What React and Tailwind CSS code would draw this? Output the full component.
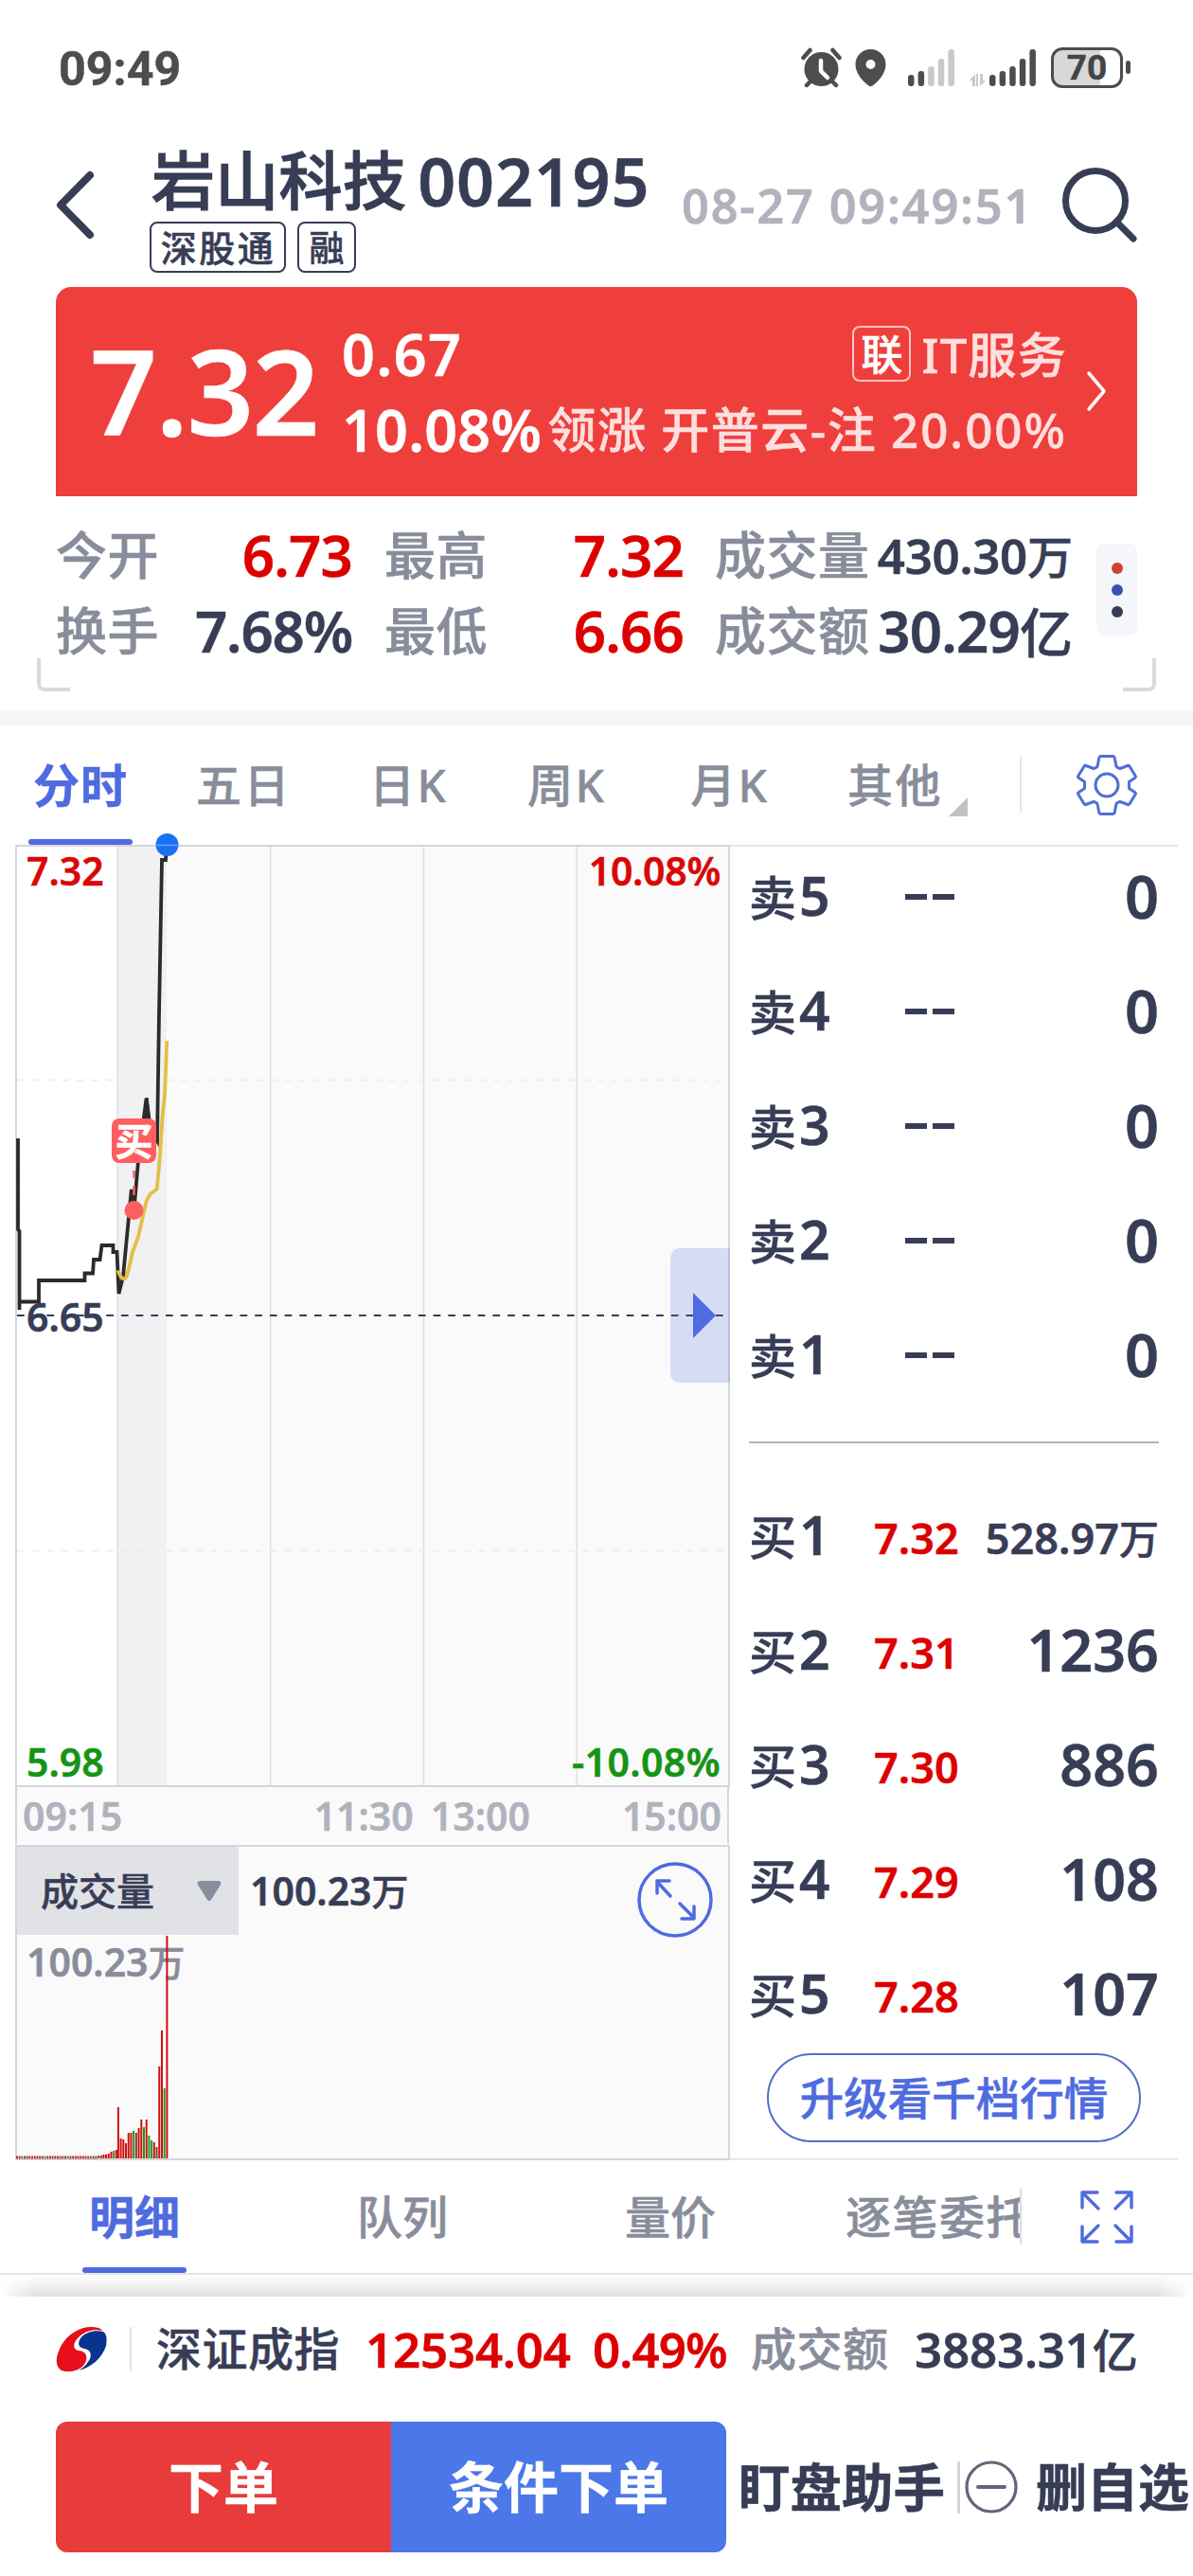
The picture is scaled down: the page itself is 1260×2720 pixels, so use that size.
const sells = ["卖5", "卖4", "卖3", "卖2", "卖1"];

const buys = [
  ["买1", "7.32", "528.97万"],
  ["买2", "7.31", "1236"],
  ["买3", "7.30", "886"],
  ["买4", "7.29", "108"],
  ["买5", "7.28", "107"],
];

// [height, colour] of each minute's volume from 09:30 on
const minuteBars = [
  [54, "r"], [21, "r"], [20, "r"], [16, "r"], [27, "r"], [27, "r"], [29, "g"], [27, "m"], [32, "r"], [41, "r"],
  [33, "g"], [41, "r"], [24, "g"], [19, "g"], [17, "r"], [12, "m"], [97, "r"], [135, "r"], [74, "g"], [235, "r"],
];
const barFill = { r: "#cf1010", g: "#1c9a1c", m: "#8a3a3a" };
const auctionRise = [3, 3, 4, 4, 5, 7, 8, 9];

function StatusBar() {
  return (
    <div className="flex h-[145px] items-start pt-[50px] pr-[66px] pl-[62px] text-[#4d4d4d]">
      <div className="font-['Roboto',sans-serif] text-[50px] leading-[46px] font-bold tracking-[0.1px]">09:49</div>
      <div className="ml-auto flex items-start">
        <svg width="254" height="44" viewBox="845 50 254 44" className="block">
          <g fill="#4d4d4d">
            <circle cx="866.5" cy="73" r="18" />
            <path d="M847.500 61l7-8M885.500 61l-7-8M851 90l5-5M882 90l-5-5" stroke="#4d4d4d" strokeWidth="4.500" strokeLinecap="round" />
            <path d="M866 64v11l7 7" fill="none" stroke="#fff" strokeWidth="4.500" strokeLinecap="round" strokeLinejoin="round" />
            <path fillRule="evenodd" d="M918.500 52c-9 0-16 7-16 16 0 10 8 18 14 22.500q2 1.500 4 0c6-4.500 14-12.500 14-22.500 0-9-7-16-16-16zm0 11a5 5 0 1 1 0 10 5 5 0 0 1 0-10z" />
            <rect x="958" y="79" width="6.500" height="12" rx="3" />
            <rect x="968.600" y="75" width="6.500" height="16" rx="3" />
            <rect x="1044" y="79" width="6.500" height="12" rx="3" />
            <rect x="1054.600" y="75" width="6.500" height="16" rx="3" />
            <rect x="1065.200" y="70" width="6.500" height="21" rx="3" />
            <rect x="1075.800" y="62" width="6.500" height="29" rx="3" />
            <rect x="1086.400" y="52" width="6.500" height="39" rx="3" />
          </g>
          <g fill="#c9c9c9">
            <rect x="979.200" y="70" width="6.500" height="21" rx="3" />
            <rect x="989.800" y="62" width="6.500" height="29" rx="3" />
            <rect x="1000.400" y="52" width="6.500" height="39" rx="3" />
            <path d="M1023 85l6-7v13h-3v-6zM1040 85l-6 6V78h3v7zM1030 78h2v13h-2z" />
          </g>
        </svg>
        <div className="ml-[10px] flex h-[43px] w-[76px] items-center justify-center rounded-[12px] border-[3px] border-[#4d4d4d] bg-linear-to-r from-[#d8d8d8] from-70% to-white to-70% font-['Roboto',sans-serif] text-[37px] leading-none font-bold text-[#444]">
          70
        </div>
        <div className="mt-[14px] ml-[3px] h-[14px] w-[5px] rounded-full bg-[#4d4d4d]" />
      </div>
    </div>
  );
}

function Header() {
  return (
    <header className="flex h-[158px] items-start">
      <svg width="42" height="76" viewBox="58 178 42 76" className="mt-[33px] ml-[58px] block" fill="none" stroke="#383d56" strokeWidth="8" strokeLinecap="round" strokeLinejoin="round">
        <path d="M95 185L64 216.500 95 248" />
      </svg>
      <div className="ml-[58px] w-[540px]">
        <div className="flex h-[89px] items-center pt-[2px] leading-none">
          <span className="ml-[2px] text-[67px] tracking-[0.3px] [-webkit-text-stroke:1.2px]">岩山科技</span>
          <span className="ml-[12px] text-[70px] font-semibold tracking-[0.8px]">002195</span>
        </div>
        <div className="flex gap-[12px]">
          <div className="flex h-[54px] w-[144px] items-center justify-center rounded-[8px] border-2 border-[#383d56] pl-[1px] text-[38px] leading-none tracking-[2.500px]">深股通</div>
          <div className="flex h-[54px] w-[62px] items-center justify-center rounded-[8px] border-2 border-[#383d56] text-[37px] leading-none">融</div>
        </div>
      </div>
      <div className="mt-[47px] ml-[22px] w-[364px] text-[50.500px] leading-[50px] font-semibold tracking-[1.800px] whitespace-nowrap text-[#b0b2be]">08-27 09:49:51</div>
      <svg width="82" height="84" viewBox="1120 175 82 84" className="mt-[30px] ml-[36px] block" fill="none" stroke="#383d56" strokeWidth="7" strokeLinecap="round">
        <circle cx="1157" cy="212" r="31.500" />
        <path d="M1179 234l18 18" />
      </svg>
    </header>
  );
}

function PriceCard() {
  return (
    <section className="mx-[59px] flex h-[221px] rounded-t-[16px] bg-[#ef3f3d] text-white">
      <div className="mt-[47px] ml-[36px] w-[266px] text-[124px] leading-[124px] font-semibold tracking-[-1.500px]">7.32</div>
      <div className="mt-[40px] w-[206px] text-[61px] leading-[61px] font-semibold whitespace-nowrap">
        <div className="tracking-[1.500px]">0.67</div>
        <div className="mt-[19px] tracking-[0.200px]">10.08%</div>
      </div>
      <div className="mt-[41px] w-[560px] text-[51px] leading-[60px] text-[#ffdfde]">
        <div className="flex justify-end gap-[11px]">
          <div className="flex h-[59px] w-[62px] items-center justify-center rounded-[8px] border-2 border-[#ffc4c3] text-[44px] leading-none text-white">联</div>
          <div className="tracking-[1.200px] whitespace-nowrap">IT服务</div>
        </div>
        <div className="mt-[19px] flex justify-end whitespace-pre"><span className="tracking-[1.500px]">领涨 开普云-注 </span><span className="tracking-[2px]">20.00%</span></div>
      </div>
      <svg width="24" height="44" viewBox="0 0 24 44" className="mt-[88px] ml-[20px] block" fill="none" stroke="#fff" strokeWidth="3.500" strokeLinecap="round" strokeLinejoin="round">
        <path d="M3 3l16 19L3 41" />
      </svg>
    </section>
  );
}

function Stats() {
  const label = "text-[54px] text-[#898d9b] tracking-[0.500px] whitespace-nowrap";
  const red = "text-right text-[60px] font-semibold text-[#dd0000] tracking-[-0.800px]";
  const dark = "flex items-baseline justify-end whitespace-nowrap";
  return (
    <section className="relative h-[226px] pt-[22px] pl-[59px]">
      <div className="flex">
        <div className="grid w-[1074px] auto-rows-[80px] grid-cols-[110px_203px_34px_110px_206px_33px_165px_213px] items-center leading-none">
          <span className={label}>今开</span><span className={red}>6.73</span><span />
          <span className={label}>最高</span><span className={red}>7.32</span><span />
          <span className={label}>成交量</span><span className={dark}><span className="text-[51px] font-semibold tracking-[-0.300px]">430.30</span><span className="text-[48px]">万</span></span>
          <span className={label}>换手</span><span className="text-right text-[60px] font-semibold tracking-[-1.200px]">7.68%</span><span />
          <span className={label}>最低</span><span className={red}>6.66</span><span />
          <span className={label}>成交额</span><span className={dark}><span className="text-[60px] font-semibold tracking-[-0.800px]">30.29</span><span className="text-[56px]">亿</span></span>
        </div>
        <div className="mt-[28px] ml-[25px] flex h-[97px] w-[43px] flex-col items-center justify-center gap-[11px] rounded-[8px] bg-[#f4f6fa]">
          <div className="size-[12px] rounded-full bg-[#c8442f]" />
          <div className="size-[12px] rounded-full bg-[#3851b3]" />
          <div className="size-[12px] rounded-full bg-[#383d56]" />
        </div>
      </div>
      <div className="absolute top-[171px] left-[39px] h-[35px] w-[35px] rounded-bl-[8px] border-b-4 border-l-4 border-[#d9dade]" />
      <div className="absolute top-[171px] left-[1186px] h-[35px] w-[35px] rounded-br-[8px] border-r-4 border-b-4 border-[#d9dade]" />
    </section>
  );
}

function PeriodTabs() {
  const tab = "text-[48px] tracking-[2.500px] text-[#898d9b] whitespace-nowrap";
  return (
    <nav className="flex h-[126px] items-stretch leading-[126px]">
      <div className="ml-[30px] flex w-[110px] flex-col">
        <div className="h-[120px] text-center text-[49px] font-bold tracking-[1px] text-[#4f6be0]">分时</div>
        <div className="h-[6px] rounded-full bg-[#4f6be0]" />
      </div>
      <div className={`${tab} ml-[67px] w-[183px]`}>五日</div>
      <div className={`${tab} w-[167px]`}>日K</div>
      <div className={`${tab} w-[172px]`}>周K</div>
      <div className={`${tab} w-[166px]`}>月K</div>
      <div className={`${tab} w-[107px]`}>其他</div>
      <svg width="20" height="20" viewBox="0 0 20 20" className="mt-[76px] block"><path d="M20 0v20H0z" fill="#c3c3c3" /></svg>
      <div className="mt-[33px] ml-[55px] h-[59px] w-[2px] bg-[#e6e6e8]" />
      <svg width="66" height="66" viewBox="-33 -33 66 66" className="mt-[30px] ml-[57px] block" fill="none" stroke="#4f6ed6" strokeWidth="3" strokeLinejoin="round">
        <path d="M-6-30.500H6Q8-30.500 8.400-28L9.800-20.500Q10-18.500 14-17.500L22-20.500Q23.500-21 24.500-19L30-10Q31-8.500 29.500-7.500L23.500-3.500V3.500L29.500 7.500Q31 8.500 30 10L24.500 19Q23.500 21 22 20.500L14 17.500Q10 18.500 9.800 20.500L8.400 28Q8 30.500 6 30.500H-6Q-8 30.500-8.400 28L-9.800 20.500Q-10 18.500-14 17.500L-22 20.500Q-23.500 21-24.500 19L-30 10Q-31 8.500-29.500 7.500L-23.500 3.500V-3.500L-29.500-7.500Q-31-8.500-30-10L-24.500-19Q-23.500-21-22-20.500L-14-17.500Q-10-18.500-9.800-20.500L-8.400-28Q-8-30.500-6-30.500Z" />
        <circle r="12" />
      </svg>
    </nav>
  );
}

function PriceChart() {
  return (
    <div className="relative h-[995px] w-[755px] text-[41px] leading-[41px] font-semibold">
      <svg width="755" height="995" viewBox="16 892 755 995" className="block overflow-visible">
        <rect x="124" y="892" width="646" height="994" fill="#fafafa" />
        <rect x="124" y="892" width="52" height="994" fill="#f1f1f4" />
        <path d="M124 893V1885M285.700 893V1885M447.500 893V1885M609 893V1885" stroke="#dfdfe0" strokeWidth="1.500" />
        <path d="M18 1140.500H770M18 1637.500H770" stroke="#ececee" strokeWidth="1.500" strokeDasharray="7.700 8" />
        <path d="M18 1389H768" stroke="#383d56" strokeWidth="1.800" strokeDasharray="7.700 8" />
        <rect x="17" y="893" width="753" height="993" fill="none" stroke="#d5d6db" strokeWidth="2" />
        <path d="M19 1202V1298L20.500 1300V1383M20 1374.500H41V1352H89.500V1344.500H98L99 1330H105.500L107.500 1315H119.500V1322H123.500L125.500 1366 130 1348 138.800 1256 142 1272 146 1226 154.500 1160 158 1190 166 1204.500 168 1070 171 908H175L176 895" fill="none" stroke="#2b2b2b" strokeWidth="3.800" />
        <path d="M153.500 1159h3l3 24h-7zM137.500 1256h4l3 16h-6z" fill="#2b2b2b" />
        <path d="M124.500 1341.500C127 1349 130 1351 132 1350S135 1345 140 1322L146 1306 152 1279 155 1267 159 1260.500 165.700 1255.500 168.500 1226 171.500 1180 174 1156 176.300 1099" fill="none" stroke="#e3bf47" strokeWidth="3.800" strokeLinejoin="round" />
        <path d="M141.500 1236v8M141.500 1252v10" stroke="#fb5f60" strokeWidth="2.500" />
        <circle cx="141.500" cy="1278" r="10" fill="#fd5e5f" />
        <circle cx="176.500" cy="892" r="12" fill="#1a70f2" />
        <path d="M164 892.500H189" stroke="#6ea3f5" strokeWidth="1.500" />
      </svg>
      <div className="absolute top-[7px] left-[12px] text-[#d90808]">7.32</div>
      <div className="absolute top-[7px] right-[10px] tracking-[-0.300px] text-[#d90808]">10.08%</div>
      <div className="absolute top-[478px] left-[12px] text-[#383d56]">6.65</div>
      <div className="absolute bottom-[6px] left-[12px] text-[#159415]">5.98</div>
      <div className="absolute right-[10px] bottom-[6px] tracking-[0.400px] text-[#159415]">-10.08%</div>
      <div className="absolute top-[289px] left-[102px] flex size-[47px] items-center justify-center rounded-[8px] bg-[#fd5e5f] text-[40px] leading-none font-bold text-white">买</div>
      <div className="absolute top-[426px] right-0 flex h-[142px] w-[63px] items-center rounded-l-[10px] bg-[#4f6be0]/21 pl-[24px]">
        <svg width="24" height="48" viewBox="0 0 24 48" className="block"><path d="M0 0L24 24 0 48z" fill="#4f6be0" /></svg>
      </div>
    </div>
  );
}

function VolumeChart() {
  return (
    <div className="relative h-[333px] w-[755px] border-2 border-[#d5d6db] bg-[#fafafa]">
      <div className="flex h-[93px] items-center leading-none">
        <div className="flex h-full w-[234px] items-center bg-[#e1e2e6] pl-[25px] text-[40px]">
          成交量
          <svg width="26" height="22" viewBox="0 0 26 22" className="ml-[45px] block"><path d="M3 0H23Q27 1 24.500 5L15 20Q13 22.500 11 20L1.500 5Q-1 1 3 0Z" fill="#898d9b" /></svg>
        </div>
        <div className="ml-[12px] flex items-baseline text-[41px] font-semibold">100.23<span className="text-[39px] font-medium">万</span></div>
        <svg width="82" height="82" viewBox="-41 -41 82 82" className="mt-[19px] mr-[15px] ml-auto block shrink-0" fill="none" stroke="#4f6be0" strokeWidth="3.500" strokeLinecap="round" strokeLinejoin="round">
          <circle r="38" />
          <path d="M-5-4L-18-18M-19-7V-20H-6M5 4L19 18M20 7V20H7" />
        </svg>
      </div>
      <div className="mt-[6px] ml-[10px] flex items-baseline text-[41px] leading-[44px] font-semibold text-[#898d9b]">100.23<span className="text-[39px] font-medium">万</span></div>
      <svg width="170" height="237" viewBox="16 2044 170 237" className="absolute bottom-[-2px] left-[-2px] block">
        {Array.from({ length: 32 }, (_, i) => (
          <rect key={i} x={17 + i * 2.69} y={2276.500} width="1.900" height="3" fill={i % 9 === 2 ? "#3f9a3f" : "#b83232"} />
        ))}
        {auctionRise.map((h, i) => (
          <rect key={i} x={103 + i * 2.69} y={2279 - h} width="2" height={h} fill={i === 0 || i === 6 ? "#3f8a2a" : "#cf1010"} />
        ))}
        {minuteBars.map(([h, c], i) => (
          <rect key={i} x={123.900 + i * 2.71} y={2279 - h} width="2" height={h} fill={barFill[c]} />
        ))}
      </svg>
    </div>
  );
}

function OrderBook() {
  return (
    <div className="mr-[16px] w-[473px] border-y-2 border-[#e7e7e9] pl-[20px]">
      <div className="pr-[20px] leading-[121px]">
        <div className="-mt-[9px] h-[637px]">
          {sells.map((name) => (
            <div key={name} className="flex h-[121px]">
              <div className="w-[165px] text-[50px]">{name.slice(0, 1)}<span className="ml-[3px] text-[57px] font-semibold tracking-normal">{name.slice(1)}</span></div>
              <div className="flex items-center gap-[6px] pt-[2px]">
                <div className="h-[6px] w-[23px] bg-[#383d56]" />
                <div className="h-[6px] w-[23px] bg-[#383d56]" />
              </div>
              <div className="ml-auto text-[63px] font-semibold">0</div>
            </div>
          ))}
        </div>
        <div className="h-[2px] bg-[#b4b4b6]" />
        <div className="mt-[36px]">
          {buys.map(([name, price, vol]) => (
            <div key={name} className="flex h-[121px]">
              <div className="w-[132px] text-[50px]">{name.slice(0, 1)}<span className="ml-[3px] text-[57px] font-semibold">{name.slice(1)}</span></div>
              <div className="pt-[3px] text-[45px] font-semibold text-[#dd0000]">{price}</div>
              {vol.endsWith("万")
                ? <div className="ml-auto pt-[3px] text-[45px] font-semibold whitespace-nowrap">{vol.slice(0, -1)}<span className="text-[42px] font-medium">万</span></div>
                : <div className="ml-auto text-[61px] font-semibold">{vol}</div>}
            </div>
          ))}
        </div>
      </div>
      <div className="mt-[3px] ml-[19px] flex h-[94px] w-[395px] items-center justify-center rounded-full border-2 border-[#5070c8] text-[46.500px] leading-none text-[#4f6be0]">升级看千档行情</div>
    </div>
  );
}

function DetailTabs() {
  return (
    <nav className="flex h-[121px] border-b-2 border-[#e4e4e6] text-[48px] leading-[120px] text-[#898d9b]">
      <div className="ml-[87px] w-[110px]">
        <div className="h-[113px] text-center font-bold text-[#4f6be0]">明细</div>
        <div className="h-[6px] rounded-full bg-[#4f6be0]" />
      </div>
      <div className="ml-[180px] w-[283px]">队列</div>
      <div className="w-[233px]">量价</div>
      <div className="w-[184px] overflow-hidden tracking-[1.500px] whitespace-nowrap">逐笔委托</div>
      <div className="mt-[30px] h-[59px] w-[2px] bg-[#dddde0]" />
      <svg width="56" height="56" viewBox="0 0 56 56" className="mt-[32px] ml-[62px] block" fill="none" stroke="#4f6be0" strokeWidth="3.400" strokeLinecap="round" strokeLinejoin="round">
        <path d="M19 19L3 3M2 18V2H18M37 19L53 3M38 2H54V18M19 37L3 53M2 38V54H18M37 37L53 53M54 38V54H38" />
      </svg>
    </nav>
  );
}

function IndexRow() {
  return (
    <div className="relative flex h-[110px] items-center bg-white pl-[59px] text-[48px] leading-none">
      <svg width="54" height="48" viewBox="0 0 54 48" className="block">
        <path d="M45 2C31-2 14 6 6 20 0 31-2 42 6 47 14 50 27 47 31 39 35 31 30 26 24 26 17 25 18 17 25 11 31 6 39 3 49 5Q48 3 45 2Z" fill="#e60f1b" />
        <path d="M50 6C42 4 31 6 26 13 22 20 25 23 30 24 37 25 39 31 34 38Q30 44 24 47C38 44 49 33 53 21Q55 9 50 6Z" fill="#0a328f" />
      </svg>
      <div className="ml-[24px] h-[47px] w-[2px] bg-[#e3e3e6]" />
      <div className="ml-[26px] w-[221px] tracking-[0.500px]">深证成指</div>
      <div className="w-[240px] text-[51px] font-semibold tracking-[-0.200px] text-[#dd0000]">12534.04</div>
      <div className="w-[167px] text-[51px] font-semibold tracking-[-0.900px] text-[#dd0000]">0.49%</div>
      <div className="w-[173px] tracking-[0.500px] text-[#898d9b]">成交额</div>
      <div className="flex items-baseline text-[51px] font-semibold tracking-[-0.200px] whitespace-nowrap">3883.31<span className="text-[48px] font-medium">亿</span></div>
    </div>
  );
}

function ActionBar() {
  return (
    <div className="mt-[22px] flex h-[138px] items-center pl-[59px] leading-none whitespace-nowrap">
      <div className="flex h-full w-[354px] items-center justify-center rounded-l-[12px] bg-[#e73c3b] text-[58px] font-bold text-white">下单</div>
      <div className="flex h-full w-[354px] items-center justify-center rounded-r-[12px] bg-[#4b77e8] text-[58px] font-bold text-white">条件下单</div>
      <div className="ml-[13px] w-[231px] text-[54.500px] font-bold">盯盘助手</div>
      <div className="h-[55px] w-[3px] bg-[#d5d6db]" />
      <svg width="56" height="56" viewBox="-28 -28 56 56" className="ml-[5px] block" fill="none" stroke="#62667a" strokeWidth="3.200" strokeLinecap="round">
        <circle r="26" />
        <path d="M-14 0H14" strokeWidth="4" />
      </svg>
      <div className="ml-[19px] text-[54px] font-bold">删自选</div>
    </div>
  );
}

export default function App() {
  return (
    <div className="h-[2720px] w-[1260px] overflow-hidden bg-white font-['Noto_Sans','Noto_Sans_CJK_SC',sans-serif] font-medium text-[#383d56] [-webkit-text-stroke:0.5px]">
      <StatusBar />
      <Header />
      <PriceCard />
      <Stats />
      <div className="h-[16px] bg-[#f6f6f9]" />
      <PeriodTabs />
      <main className="flex h-[1389px] justify-between pl-[16px]">
        <div className="w-[755px]">
          <PriceChart />
          <div className="mb-[1px] flex h-[60px] w-[754px] items-center border-x-2 border-[#d5d6db] bg-[#fafafa] pr-[6px] pl-[6px] text-[41px] leading-none font-semibold text-[#b0b2be]">
            <span>09:15</span>
            <span className="ml-auto">11:30</span>
            <span className="mr-[97px] ml-[18px]">13:00</span>
            <span>15:00</span>
          </div>
          <VolumeChart />
        </div>
        <OrderBook />
      </main>
      <DetailTabs />
      <div className="h-[23px] bg-linear-to-b from-white to-[#e0e0e0] mask-[linear-gradient(to_right,transparent,black_3%,black_97%,transparent)]" />
      <IndexRow />
      <ActionBar />
    </div>
  );
}
